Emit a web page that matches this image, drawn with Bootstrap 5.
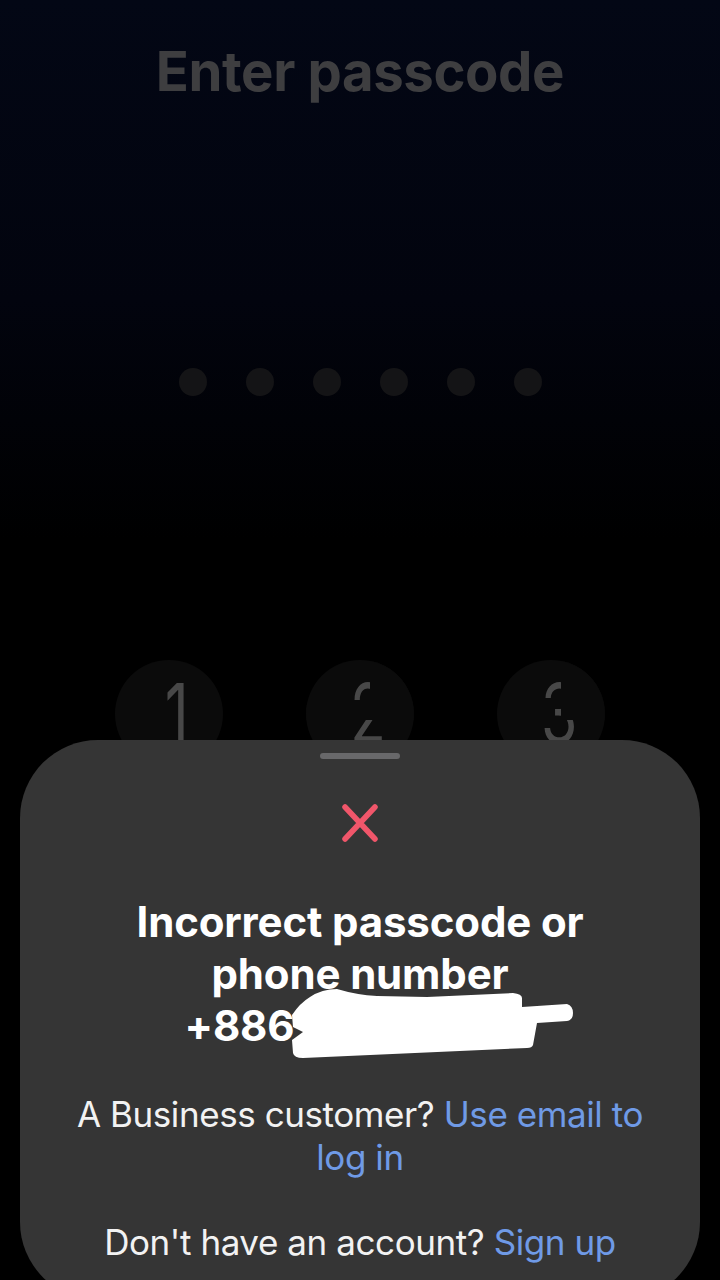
<!doctype html>
<html lang="en">
<head>
<meta charset="utf-8">
<link href="https://cdn.jsdelivr.net/npm/bootstrap@5.3.0/dist/css/bootstrap.min.css" rel="stylesheet">
<style>
html,body{height:1280px;overflow:hidden;margin:0}
body{font-family:Inter,"Liberation Sans",sans-serif;background:#000}
.screen{width:720px;height:1280px;overflow:hidden;background:linear-gradient(180deg,#030715 0,#02040e 300px,#000 540px)}
.title-dim{padding-top:40px;height:368px;margin:0;font-size:54.5px;font-weight:700;line-height:62px;color:#3e3e40;letter-spacing:-.4px}
.dot-row{gap:39px;height:28px}
.pin-dot{width:28px;height:28px;border-radius:50%;background:#141416}
.keys{margin-top:264px;gap:83px;height:200px}
.key-cap{width:108px;height:108px;border-radius:50%;background:#0b0b0b;color:#484848;font-size:82px;font-weight:400;line-height:108px;text-align:center;position:relative;overflow:hidden}
.key-num{display:inline-block;transform:translateX(8px) scaleX(.72)}
.key-mask{position:absolute;background:#0b0b0b}
.mask-right{left:64px;top:0;width:44px;height:60px}
.mask-mid{left:0;top:44px;width:64px;height:16px}
.sheet{position:absolute;left:20px;top:740px;width:680px;height:560px;border-radius:78px;background:#353535;color:#fff}
.grabber{width:80px;height:6px;border-radius:3px;background:#68686a;margin-top:13px}
.x-mark{width:38px;height:38px;margin-top:45px;display:block}
.sheet-title{font-size:42px;font-weight:700;line-height:52px;margin:54px 0 0;color:#fff;letter-spacing:-.15px}
.phone-gap{display:inline-block;width:241px}
.sheet-text{font-size:35px;line-height:43px;margin:0;color:#f2f2f2;letter-spacing:-.42px}
.text-one{margin-top:41px}
.text-two{margin-top:42px}
.accent{color:#6f9ae6;text-decoration:none}
.scribble{position:absolute;left:285px;top:985px;width:295px;height:80px}
</style>
</head>
<body>
<div class="screen position-relative">
  <h1 class="title-dim text-center">Enter passcode</h1>
  <div class="dot-row d-flex justify-content-center">
    <span class="pin-dot"></span><span class="pin-dot"></span><span class="pin-dot"></span><span class="pin-dot"></span><span class="pin-dot"></span><span class="pin-dot"></span>
  </div>
  <div class="keys d-flex justify-content-center">
    <div class="key-cap"><span class="key-num">1</span></div>
    <div class="key-cap"><span class="key-num">2</span><span class="key-mask mask-right"></span><span class="key-mask mask-mid"></span></div>
    <div class="key-cap"><span class="key-num">3</span><span class="key-mask mask-right"></span></div>
  </div>
  <div class="sheet d-flex flex-column align-items-center text-center">
    <div class="grabber"></div>
    <svg class="x-mark" viewBox="0 0 38 38" aria-hidden="true"><path d="M4 3 34 35M34 3 4 35" stroke="#f0566a" stroke-width="5.5" stroke-linecap="round" fill="none"/></svg>
    <h2 class="sheet-title">Incorrect passcode or<br>phone number<br>+886<span class="phone-gap"></span></h2>
    <p class="sheet-text text-one">A Business customer? <a class="accent" href="#">Use email to<br>log in</a></p>
    <p class="sheet-text text-two">Don't have an account? <a class="accent" href="#">Sign up</a></p>
  </div>
  <svg class="scribble" viewBox="285 985 295 80" aria-hidden="true"><path d="M292 1015 Q300 1003 310 997 Q322 989 337 989 Q357 995 377 996 L427 997 L513 993 Q522 994 522 998 L522 1007 L567 1004 Q573 1006 573 1013 Q573 1020 567 1021 L537 1023 L533 1045 Q532 1048 527 1048 L303 1058 Q294 1058 293 1053 L292 1040 L303 1032 L293 1027 Z" fill="#fff"/></svg>
</div>
</body>
</html>
